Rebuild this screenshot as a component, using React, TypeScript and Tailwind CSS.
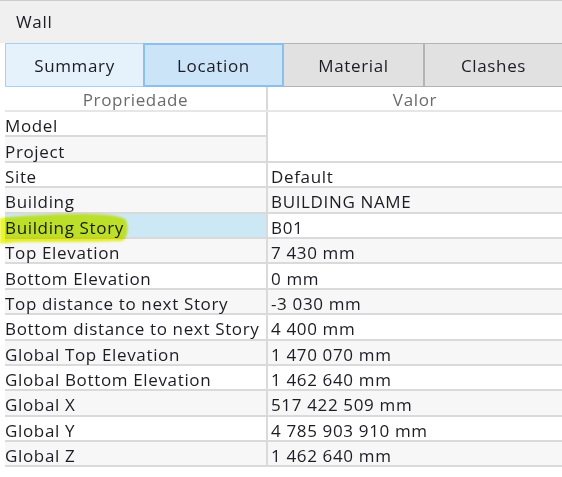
import React from "react";

const rows: [string, string][] = [
  ["Model", ""],
  ["Project", ""],
  ["Site", "Default"],
  ["Building", "BUILDING NAME"],
  ["Building Story", "B01"],
  ["Top Elevation", "7 430 mm"],
  ["Bottom Elevation", "0 mm"],
  ["Top distance to next Story", "-3 030 mm"],
  ["Bottom distance to next Story", "4 400 mm"],
  ["Global Top Elevation", "1 470 070 mm"],
  ["Global Bottom Elevation", "1 462 640 mm"],
  ["Global X", "517 422 509 mm"],
  ["Global Y", "4 785 903 910 mm"],
  ["Global Z", "1 462 640 mm"],
];

export default function App() {
  return (
    <div className="relative w-[562px] h-[477px] overflow-hidden bg-white font-['Open_Sans',sans-serif] text-[17px] tracking-[0.65px] text-[#1c1c24]">
      <div className="h-[43px] bg-[#f0f0f0] border-t border-[#cdcdcd] flex items-center pl-[16px]">
        Wall
      </div>
      <div className="flex h-[44px] pl-[5px]">
        <div className="w-[138px] flex items-center justify-center pt-[2px] bg-[#e5f1fb] border border-[#a9d0f0] border-r-0">
          Summary
        </div>
        <div className="w-[141px] flex items-center justify-center pt-[2px] bg-[#cce4f7] border-2 border-[#8cc0ec]">
          Location
        </div>
        <div className="w-[141px] flex items-center justify-center pt-[2px] bg-[#e1e1e1] border border-[#b4b4b4] border-l-0 border-r-2">
          Material
        </div>
        <div className="flex-1 flex items-center justify-center pt-[2px] bg-[#e1e1e1] border border-[#b4b4b4] border-l-0 border-r-0">
          Clashes
        </div>
      </div>
      <div className="ml-[5px] flex h-[25px] border-b-2 border-[#e6e6e6] text-[#6b6b6b]">
        <div className="w-[263px] flex items-center justify-center pt-[3px] border-r-2 border-[#d8d8d8]">
          Propriedade
        </div>
        <div className="flex-1 flex items-center justify-center pt-[3px]">Valor</div>
      </div>
      <div className="ml-[5px]">
        {rows.map(([k, v], i) => {
          const selected = i === 4;
          const alt = i % 2 === 1;
          const bg = alt ? "bg-[#f7f7f7]" : "bg-white";
          const noValLine = i === 0;
          return (
            <div key={k} className="flex h-[25.4px]">
              <div
                className={`w-[263px] flex items-center pt-[4px] border-b-2 border-r-2 border-[#dadada] leading-none whitespace-nowrap ${
                  selected ? "bg-[#cde8f5]" : bg
                }`}
              >
                {k}
              </div>
              <div
                className={`flex-1 flex items-center pl-[3px] pt-[4px] leading-none whitespace-nowrap ${
                  i < 2 ? "bg-white" : bg
                } ${noValLine ? "" : "border-b-2 border-[#dadada]"}`}
              >
                {v}
              </div>
            </div>
          );
        })}
      </div>
      <svg
        className="absolute left-0 top-[211px] pointer-events-none mix-blend-multiply"
        width="140"
        height="36"
        viewBox="0 0 140 36"
      >
        <defs>
          <filter id="b" x="-10%" y="-20%" width="120%" height="140%">
            <feGaussianBlur stdDeviation="1.2" />
          </filter>
        </defs>
        <path
          d="M0 7 C20 5 50 3 80 3 C100 3 118 4 125 8 C129 14 128 25 123 30 C100 31 60 31 30 31 C15 31 5 32 0 33 Z"
          fill="#eaf52a"
          filter="url(#b)"
        />
      </svg>
    </div>
  );
}
